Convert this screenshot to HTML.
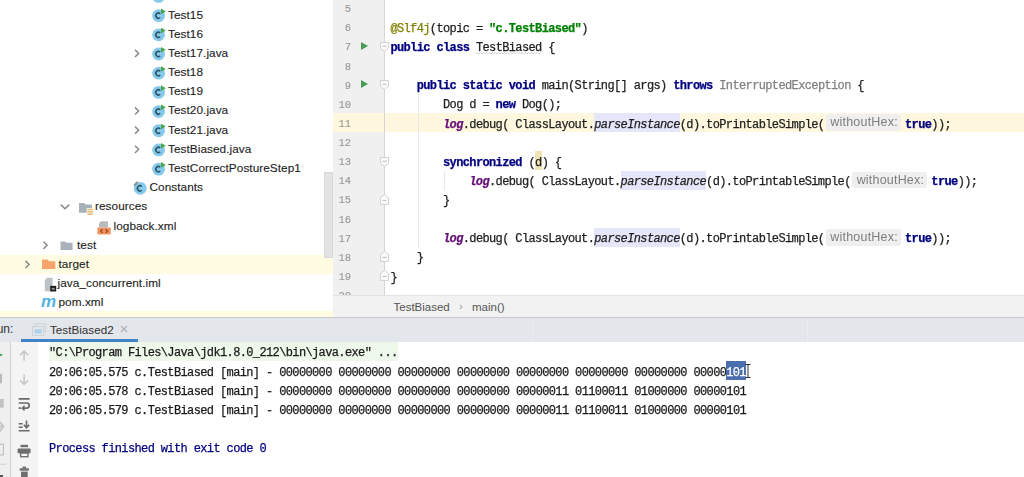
<!DOCTYPE html><html><head><meta charset="utf-8"><style>
*{margin:0;padding:0;box-sizing:border-box}
html,body{width:1024px;height:477px;overflow:hidden;background:#fff}
body{position:relative;font-family:"Liberation Sans",sans-serif;color:#1e1e1e}
.a{position:absolute}
.m{font-family:"Liberation Mono",monospace;font-size:12.000px;letter-spacing:-0.625px;white-space:pre;line-height:19px;-webkit-text-stroke:0.25px currentColor}
.k{color:#000080;font-weight:bold}
.s{color:#008000;font-weight:bold}
.an{color:#808000}
.lg{color:#660e7a;font-weight:bold;font-style:italic}
.it{font-style:italic}
.pi{background:#e6e6fa}
.gr{color:#808080}
.ln{color:#999;text-align:right;width:40px;font-size:10.5px!important;letter-spacing:0!important;-webkit-text-stroke:0.15px currentColor!important}
.tr{font-size:11.8px;line-height:19px;white-space:nowrap;color:#1e1e1e;-webkit-text-stroke:0.12px currentColor;letter-spacing:0.05px}
</style></head><body><div class="a" style="left:0;top:0;width:1024px;height:477px;overflow:hidden;filter:blur(0.5px)"><div class="a" style="left:0;top:0;width:333px;height:317px;background:#fff"></div>
<div class="a" style="left:0;top:254.77px;width:333px;height:19px;background:#fffce2"></div>
<div class="a" style="left:0;top:310.6px;width:333px;height:6.3px;background:#fffce2"></div>
<div class="a" style="left:323.5px;top:172px;width:9px;height:86px;background:#e3e3e3;border:1px solid #d8d8d8"></div>
<div class="a tr" style="left:168px;top:-13.69px">Test14</div>
<div class="a tr" style="left:168px;top:5.50px">Test15</div>
<div class="a tr" style="left:168px;top:24.69px">Test16</div>
<div class="a tr" style="left:168px;top:43.88px">Test17.java</div>
<div class="a tr" style="left:168px;top:63.07px">Test18</div>
<div class="a tr" style="left:168px;top:82.26px">Test19</div>
<div class="a tr" style="left:168px;top:101.45px">Test20.java</div>
<div class="a tr" style="left:168px;top:120.64px">Test21.java</div>
<div class="a tr" style="left:168px;top:139.83px">TestBiased.java</div>
<div class="a tr" style="left:168px;top:159.02px">TestCorrectPostureStep1</div>
<div class="a tr" style="left:149.5px;top:178.21px">Constants</div>
<div class="a tr" style="left:95px;top:197.40px">resources</div>
<div class="a tr" style="left:113.5px;top:216.59px">logback.xml</div>
<div class="a tr" style="left:77px;top:235.78px">test</div>
<div class="a tr" style="left:58.5px;top:254.97px">target</div>
<div class="a tr" style="left:57.5px;top:274.16px">java_concurrent.iml</div>
<div class="a" style="left:41px;top:293.05px;font-family:'Liberation Sans',sans-serif;font-style:italic;font-weight:bold;font-size:17px;line-height:17px;color:#52b3e3">m</div>
<div class="a tr" style="left:58.5px;top:293.35px">pom.xml</div>
<svg class="a" style="left:0;top:0" width="333" height="317" viewBox="0 0 333 317"><circle cx="158.60" cy="-3.59" r="6.4" fill="#87c9ea"/><path d="M160.20 -5.49 A2.6 2.6 0 1 0 160.20 -1.69" stroke="#2c5568" stroke-width="1.6" fill="none"/><path d="M161.00 -10.59 L165.80 -7.79 L161.00 -4.99 Z" fill="#47a64e"/><circle cx="158.60" cy="15.60" r="6.4" fill="#87c9ea"/><path d="M160.20 13.70 A2.6 2.6 0 1 0 160.20 17.50" stroke="#2c5568" stroke-width="1.6" fill="none"/><path d="M161.00 8.60 L165.80 11.40 L161.00 14.20 Z" fill="#47a64e"/><circle cx="158.60" cy="34.79" r="6.4" fill="#87c9ea"/><path d="M160.20 32.89 A2.6 2.6 0 1 0 160.20 36.69" stroke="#2c5568" stroke-width="1.6" fill="none"/><path d="M161.00 27.79 L165.80 30.59 L161.00 33.39 Z" fill="#47a64e"/><circle cx="158.60" cy="53.98" r="6.4" fill="#87c9ea"/><path d="M160.20 52.08 A2.6 2.6 0 1 0 160.20 55.88" stroke="#2c5568" stroke-width="1.6" fill="none"/><path d="M161.00 46.98 L165.80 49.78 L161.00 52.58 Z" fill="#47a64e"/><path d="M135.00 49.78 L138.60 53.38 L135.00 56.98" stroke="#8a8a8a" stroke-width="1.5" fill="none"/><circle cx="158.60" cy="73.17" r="6.4" fill="#87c9ea"/><path d="M160.20 71.27 A2.6 2.6 0 1 0 160.20 75.07" stroke="#2c5568" stroke-width="1.6" fill="none"/><path d="M161.00 66.17 L165.80 68.97 L161.00 71.77 Z" fill="#47a64e"/><circle cx="158.60" cy="92.36" r="6.4" fill="#87c9ea"/><path d="M160.20 90.46 A2.6 2.6 0 1 0 160.20 94.26" stroke="#2c5568" stroke-width="1.6" fill="none"/><path d="M161.00 85.36 L165.80 88.16 L161.00 90.96 Z" fill="#47a64e"/><circle cx="158.60" cy="111.55" r="6.4" fill="#87c9ea"/><path d="M160.20 109.65 A2.6 2.6 0 1 0 160.20 113.45" stroke="#2c5568" stroke-width="1.6" fill="none"/><path d="M161.00 104.55 L165.80 107.35 L161.00 110.15 Z" fill="#47a64e"/><path d="M135.00 107.35 L138.60 110.95 L135.00 114.55" stroke="#8a8a8a" stroke-width="1.5" fill="none"/><circle cx="158.60" cy="130.74" r="6.4" fill="#87c9ea"/><path d="M160.20 128.84 A2.6 2.6 0 1 0 160.20 132.64" stroke="#2c5568" stroke-width="1.6" fill="none"/><path d="M161.00 123.74 L165.80 126.54 L161.00 129.34 Z" fill="#47a64e"/><path d="M135.00 126.54 L138.60 130.14 L135.00 133.74" stroke="#8a8a8a" stroke-width="1.5" fill="none"/><circle cx="158.60" cy="149.93" r="6.4" fill="#87c9ea"/><path d="M160.20 148.03 A2.6 2.6 0 1 0 160.20 151.83" stroke="#2c5568" stroke-width="1.6" fill="none"/><path d="M161.00 142.93 L165.80 145.73 L161.00 148.53 Z" fill="#47a64e"/><path d="M135.00 145.73 L138.60 149.33 L135.00 152.93" stroke="#8a8a8a" stroke-width="1.5" fill="none"/><circle cx="158.60" cy="169.12" r="6.4" fill="#87c9ea"/><path d="M160.20 167.22 A2.6 2.6 0 1 0 160.20 171.02" stroke="#2c5568" stroke-width="1.6" fill="none"/><path d="M161.00 162.12 L165.80 164.92 L161.00 167.72 Z" fill="#47a64e"/><circle cx="140.20" cy="188.31" r="6.4" fill="#87c9ea"/><path d="M141.80 186.41 A2.6 2.6 0 1 0 141.80 190.21" stroke="#2c5568" stroke-width="1.6" fill="none"/><path d="M134.70 185.11 L137.00 182.51" stroke="#8f959a" stroke-width="2.2" stroke-linecap="round"/><path d="M60.80 204.60 L65.00 208.80 L69.20 204.60" stroke="#8a8a8a" stroke-width="1.5" fill="none"/><path d="M79 203.10 H84 L85.5 204.60 H92 V212.80 H79 Z" fill="#a6b1ba"/><rect x="86.6" y="208.10" width="6.4" height="7.2" fill="#fff"/><rect x="87.3" y="208.80" width="5.6" height="1.5" fill="#e5b870"/><rect x="87.3" y="211.10" width="5.6" height="1.5" fill="#e5b870"/><rect x="87.3" y="213.40" width="5.6" height="1.5" fill="#e5b870"/><path d="M101 221.19 H108 V227.59 H99 V223.19 Z" fill="#b9bcbe"/><rect x="97.4" y="227.59" width="13.4" height="6.8" fill="#ef9160"/><path d="M102.6 229.09 L100.6 230.99 L102.6 232.89 M105.6 229.09 L107.6 230.99 L105.6 232.89" stroke="#9a4516" stroke-width="1.2" fill="none"/><path d="M43.50 241.68 L47.10 245.28 L43.50 248.88" stroke="#8a8a8a" stroke-width="1.5" fill="none"/><path d="M60.5 241.48 H65 L66.5 242.78 H72.6 V250.08 H60.5 Z" fill="#a9b1ba"/><path d="M25.50 260.87 L29.10 264.47 L25.50 268.07" stroke="#8a8a8a" stroke-width="1.5" fill="none"/><path d="M42 259.47 H47.5 L49 261.27 H55.3 V269.07 H42 Z" fill="#f6a36c"/><path d="M47 277.86 H52.5 V291.16 H44.8 V280.16 Z" fill="#bfc2c4"/><rect x="50.2" y="285.86" width="6" height="5.6" fill="#1e1e1e"/><rect x="51.7" y="287.86" width="3" height="1.8" fill="#999"/></svg>
<div class="a" style="left:333px;top:0;width:691px;height:295px;background:#fff"></div>
<div class="a" style="left:333px;top:0;width:51px;height:295px;background:#f0f0f0"></div>
<div class="a" style="left:333px;top:113.25px;width:691px;height:19px;background:#fff8df"></div>
<div class="a" style="left:384px;top:0;width:1px;height:295px;background:#d6d6d6"></div>
<div class="a m ln" style="left:311px;top:0.12px">5</div>
<div class="a m ln" style="left:311px;top:19.25px">6</div>
<div class="a m ln" style="left:311px;top:38.38px">7</div>
<div class="a m ln" style="left:311px;top:57.51px">8</div>
<div class="a m ln" style="left:311px;top:76.64px">9</div>
<div class="a m ln" style="left:311px;top:95.77px">10</div>
<div class="a m ln" style="left:311px;top:114.90px">11</div>
<div class="a m ln" style="left:311px;top:134.03px">12</div>
<div class="a m ln" style="left:311px;top:153.16px">13</div>
<div class="a m ln" style="left:311px;top:172.29px">14</div>
<div class="a m ln" style="left:311px;top:191.42px">15</div>
<div class="a m ln" style="left:311px;top:210.55px">16</div>
<div class="a m ln" style="left:311px;top:229.68px">17</div>
<div class="a m ln" style="left:311px;top:248.81px">18</div>
<div class="a m ln" style="left:311px;top:267.94px">19</div>
<div class="a m ln" style="left:311px;top:287.07px">20</div>
<svg class="a" style="left:360px;top:41.03px" width="9" height="10" viewBox="0 0 9 10"><path d="M1 1 L8 5 L1 9 Z" fill="#499c54"/></svg>
<svg class="a" style="left:360px;top:79.29px" width="9" height="10" viewBox="0 0 9 10"><path d="M1 1 L8 5 L1 9 Z" fill="#499c54"/></svg>
<svg class="a" style="left:380px;top:41.93px" width="9" height="11" viewBox="0 0 9 11"><path d="M0.5 0.5 H8.5 V6.2 L4.5 9.4 L0.5 6.2 Z" fill="#fbfbfb" stroke="#cdcdcd" stroke-width="0.9"/><path d="M2.6 4.2 H6.4" stroke="#b0b0b0" stroke-width="0.9"/></svg>
<svg class="a" style="left:380px;top:80.19px" width="9" height="11" viewBox="0 0 9 11"><path d="M0.5 0.5 H8.5 V6.2 L4.5 9.4 L0.5 6.2 Z" fill="#fbfbfb" stroke="#cdcdcd" stroke-width="0.9"/><path d="M2.6 4.2 H6.4" stroke="#b0b0b0" stroke-width="0.9"/></svg>
<svg class="a" style="left:380px;top:156.71px" width="9" height="11" viewBox="0 0 9 11"><path d="M0.5 0.5 H8.5 V6.2 L4.5 9.4 L0.5 6.2 Z" fill="#fbfbfb" stroke="#cdcdcd" stroke-width="0.9"/><path d="M2.6 4.2 H6.4" stroke="#b0b0b0" stroke-width="0.9"/></svg>
<svg class="a" style="left:380px;top:193.57px" width="9" height="11" viewBox="0 0 9 11"><path d="M0.5 10.4 H8.5 V3.7 L4.5 0.5 L0.5 3.7 Z" fill="#fbfbfb" stroke="#cdcdcd" stroke-width="0.9"/><path d="M2.6 6.4 H6.4" stroke="#b0b0b0" stroke-width="0.9"/></svg>
<svg class="a" style="left:380px;top:250.96px" width="9" height="11" viewBox="0 0 9 11"><path d="M0.5 10.4 H8.5 V3.7 L4.5 0.5 L0.5 3.7 Z" fill="#fbfbfb" stroke="#cdcdcd" stroke-width="0.9"/><path d="M2.6 6.4 H6.4" stroke="#b0b0b0" stroke-width="0.9"/></svg>
<svg class="a" style="left:380px;top:270.09px" width="9" height="11" viewBox="0 0 9 11"><path d="M0.5 10.4 H8.5 V3.7 L4.5 0.5 L0.5 3.7 Z" fill="#fbfbfb" stroke="#cdcdcd" stroke-width="0.9"/><path d="M2.6 6.4 H6.4" stroke="#b0b0b0" stroke-width="0.9"/></svg>
<div class="a" style="left:417.7px;top:94.12px;width:1px;height:153.0px;background:#e8e8e8"></div>
<div class="a" style="left:444.0px;top:170.64px;width:1px;height:19.1px;background:#e8e8e8"></div>
<div class="a m" style="left:390.40px;top:19.90px"><span class="an">@Slf4j</span>(topic = <b class="s">"c.TestBiased"</b>)</div>
<div class="a m" style="left:390.40px;top:39.03px"><b class="k">public</b> <b class="k">class</b> TestBiased {</div>
<svg class="a" style="left:475.88px;top:52.23px" width="65.8" height="3" viewBox="0 0 65.8 3"><path d="M0 2 L1.5 0.5 L3.0 2 L4.5 0.5 L6.0 2 L7.5 0.5 L9.0 2 L10.5 0.5 L12.0 2 L13.5 0.5 L15.0 2 L16.5 0.5 L18.0 2 L19.5 0.5 L21.0 2 L22.5 0.5 L24.0 2 L25.5 0.5 L27.0 2 L28.5 0.5 L30.0 2 L31.5 0.5 L33.0 2 L34.5 0.5 L36.0 2 L37.5 0.5 L39.0 2 L40.5 0.5 L42.0 2 L43.5 0.5 L45.0 2 L46.5 0.5 L48.0 2 L49.5 0.5 L51.0 2 L52.5 0.5 L54.0 2 L55.5 0.5 L57.0 2 L58.5 0.5 L60.0 2 L61.5 0.5 L63.0 2 L64.5 0.5" stroke="#c9c9c9" stroke-width="0.8" fill="none"/></svg>
<div class="a m" style="left:416.70px;top:77.29px"><b class="k">public</b> <b class="k">static</b> <b class="k">void</b> main(String[] args) <b class="k">throws</b> <span class="gr">InterruptedException</span> {</div>
<div class="a m" style="left:443.00px;top:96.42px">Dog d = <b class="k">new</b> Dog();</div>
<div class="a" style="left:535.05px;top:151.01px;width:6.6px;height:19px;background:#efe4b5"></div>
<div class="a m" style="left:443.00px;top:153.81px"><b class="k">synchronized</b> (d) {</div>
<div class="a m" style="left:443.00px;top:192.07px">}</div>
<div class="a m" style="left:416.70px;top:249.46px">}</div>
<div class="a m" style="left:390.40px;top:268.59px">}</div>
<div class="a pi" style="left:594.23px;top:113.25px;width:85.48px;height:19px"></div><div class="a m" style="left:443.00px;top:115.55px"><span class="lg">log</span>.debug( ClassLayout.<span class="it">parseInstance</span>(d).toPrintableSimple(</div><div class="a" style="left:825.85px;top:114.25px;width:75px;height:16.8px;background:#efefef;border-radius:3px"></div><div class="a" style="left:830.35px;top:113.25px;font-size:12.5px;letter-spacing:0.2px;line-height:19px;color:#7e7e7e;white-space:nowrap">withoutHex:</div><div class="a m" style="left:905.05px;top:115.55px"><b class="k">true</b>));</div>
<div class="a pi" style="left:620.52px;top:170.64px;width:85.48px;height:19px"></div><div class="a m" style="left:469.30px;top:172.94px"><span class="lg">log</span>.debug( ClassLayout.<span class="it">parseInstance</span>(d).toPrintableSimple(</div><div class="a" style="left:852.15px;top:171.64px;width:75px;height:16.8px;background:#efefef;border-radius:3px"></div><div class="a" style="left:856.65px;top:170.64px;font-size:12.5px;letter-spacing:0.2px;line-height:19px;color:#7e7e7e;white-space:nowrap">withoutHex:</div><div class="a m" style="left:931.35px;top:172.94px"><b class="k">true</b>));</div>
<div class="a pi" style="left:594.23px;top:228.03px;width:85.48px;height:19px"></div><div class="a m" style="left:443.00px;top:230.33px"><span class="lg">log</span>.debug( ClassLayout.<span class="it">parseInstance</span>(d).toPrintableSimple(</div><div class="a" style="left:825.85px;top:229.03px;width:75px;height:16.8px;background:#efefef;border-radius:3px"></div><div class="a" style="left:830.35px;top:228.03px;font-size:12.5px;letter-spacing:0.2px;line-height:19px;color:#7e7e7e;white-space:nowrap">withoutHex:</div><div class="a m" style="left:905.05px;top:230.33px"><b class="k">true</b>));</div>
<div class="a" style="left:333px;top:294.5px;width:691px;height:22.5px;background:#f2f2f2;border-top:1px solid #e2e2e2"></div>
<div class="a" style="left:393.5px;top:297.5px;font-size:11.5px;line-height:19px;color:#555;white-space:nowrap">TestBiased</div>
<div class="a" style="left:459px;top:297px;font-size:11px;line-height:19px;color:#999;white-space:nowrap">›</div>
<div class="a" style="left:472px;top:297.5px;font-size:11.5px;line-height:19px;color:#555;white-space:nowrap">main()</div>
<div class="a" style="left:0;top:316.5px;width:1024px;height:1px;background:#c9c9c9"></div>
<div class="a" style="left:0;top:317.5px;width:1024px;height:24.5px;background:#e3e6eb"></div>
<div class="a" style="left:532px;top:318px;width:1px;height:24px;background:#eaedf1"></div>
<div class="a" style="left:807px;top:318px;width:1px;height:24px;background:#eaedf1"></div>
<div class="a" style="left:-12px;top:320px;font-size:12px;line-height:19px;color:#333;white-space:nowrap">Run:</div>
<svg class="a" style="left:31.5px;top:322.5px" width="15" height="14" viewBox="0 0 15 14"><rect x="3.2" y="0.8" width="10.4" height="7.6" fill="none" stroke="#ccd2d8" stroke-width="0.9"/><rect x="0.6" y="3.6" width="11.2" height="8.8" fill="#e4e7ec" stroke="#c9cfd5" stroke-width="0.9"/><rect x="2.6" y="6.2" width="7" height="4.3" fill="#acd3ec"/></svg>
<div class="a" style="left:50px;top:320px;font-size:11.7px;line-height:19px;color:#333;white-space:nowrap">TestBiased2</div>
<svg class="a" style="left:120px;top:325px" width="8" height="8" viewBox="0 0 8 8"><path d="M1 1 L7 7 M7 1 L1 7" stroke="#b0b0b0" stroke-width="1.1"/></svg>
<div class="a" style="left:20.5px;top:339px;width:117.5px;height:3px;background:#4083c9"></div>
<div class="a" style="left:0;top:342px;width:10px;height:135px;background:#efefef"></div>
<div class="a" style="left:10px;top:342px;width:1px;height:135px;background:#cfcfcf"></div>
<div class="a" style="left:11px;top:342px;width:27px;height:135px;background:#f4f4f4"></div>
<svg class="a" style="left:0;top:0" width="40" height="477" viewBox="0 0 40 477"><path d="M-3 352.4 L3.2 354.9 L-3 357.4 Z" fill="#4aa050"/><rect x="-2" y="373.8" width="4" height="9.5" fill="#b8b8b8"/><rect x="-3" y="399" width="6.8" height="8.6" fill="#c2c2c2"/><path d="M-1 421 L3.5 426.5 L-1 432 M-2 426.5 H3" stroke="#c6c6c6" stroke-width="1.8" fill="none"/><rect x="-4" y="444.3" width="7.4" height="10.6" fill="none" stroke="#c4c4c4" stroke-width="1.3"/><rect x="0" y="463.7" width="6.3" height="1" fill="#cfcfcf"/><rect x="-2" y="475" width="5" height="4" fill="#555"/><path d="M24.1 360.8 V351.2 M20 355.2 L24.1 351 L28.2 355.2" stroke="#c4c4c4" stroke-width="1.5" fill="none"/><path d="M24.1 374.5 V384.2 M20 380.2 L24.1 384.4 L28.2 380.2" stroke="#c4c4c4" stroke-width="1.5" fill="none"/><path d="M18.7 398.8 H29.6 M18.7 403 H26.6 A2.6 2.6 0 0 1 26.6 408.2 H23" stroke="#6a6a6a" stroke-width="1.7" fill="none"/><path d="M24.6 405.6 L22.2 408.2 L24.6 410.6" stroke="#6a6a6a" stroke-width="1.4" fill="none"/><rect x="18.7" y="407.2" width="2.2" height="1.8" fill="#6a6a6a"/><path d="M18.7 423.8 H22.7 M18.7 427.3 H22.7 M18.7 430.7 H29.6" stroke="#6a6a6a" stroke-width="1.6" fill="none"/><path d="M26.5 420.4 V427.5 M23.8 424.8 L26.5 427.8 L29.2 424.8" stroke="#6a6a6a" stroke-width="1.6" fill="none"/><rect x="20.5" y="444.8" width="7.5" height="2.4" fill="#6e6e6e"/><rect x="17.6" y="448.6" width="13" height="4.6" rx="0.8" fill="#6e6e6e"/><rect x="20.6" y="453" width="7.4" height="3.7" fill="none" stroke="#6e6e6e" stroke-width="1.4"/><rect x="19.7" y="468.3" width="9.2" height="2.4" fill="#6e6e6e"/><rect x="22.5" y="466.6" width="3.6" height="2" fill="#6e6e6e"/><rect x="21" y="471.6" width="6.7" height="8" fill="#6e6e6e"/></svg>
<div class="a" style="left:48.5px;top:342px;width:349px;height:18.5px;background:#eef8ea"></div>
<div class="a m" style="left:49px;top:344.40px;color:#1a1a1a">"C:\Program Files\Java\jdk1.8.0_212\bin\java.exe" ...</div>
<div class="a m" style="left:49px;top:363.58px;color:#1a1a1a">20:06:05.575 c.TestBiased [main] - 00000000 00000000 00000000 00000000 00000000 00000000 00000000 00000</div>
<div class="a" style="left:726.23px;top:361.2px;width:19.73px;height:19.3px;background:#4b6eaf"></div>
<div class="a m" style="left:726.23px;top:363.58px;color:#fff">101</div>
<svg class="a" style="left:745px;top:364px" width="6" height="14" viewBox="0 0 6 14"><path d="M0.5 0.5 H5.5 M3 0.5 V13.5 M0.5 13.5 H5.5" stroke="#333" stroke-width="1"/></svg>
<div class="a m" style="left:49px;top:382.76px;color:#1a1a1a">20:06:05.578 c.TestBiased [main] - 00000000 00000000 00000000 00000000 00000011 01100011 01000000 00000101</div>
<div class="a m" style="left:49px;top:401.94px;color:#1a1a1a">20:06:05.579 c.TestBiased [main] - 00000000 00000000 00000000 00000000 00000011 01100011 01000000 00000101</div>
<div class="a m" style="left:49px;top:440.30px;color:#1a1a1a"><span style="color:#000080">Process finished with exit code 0</span></div></div></body></html>
